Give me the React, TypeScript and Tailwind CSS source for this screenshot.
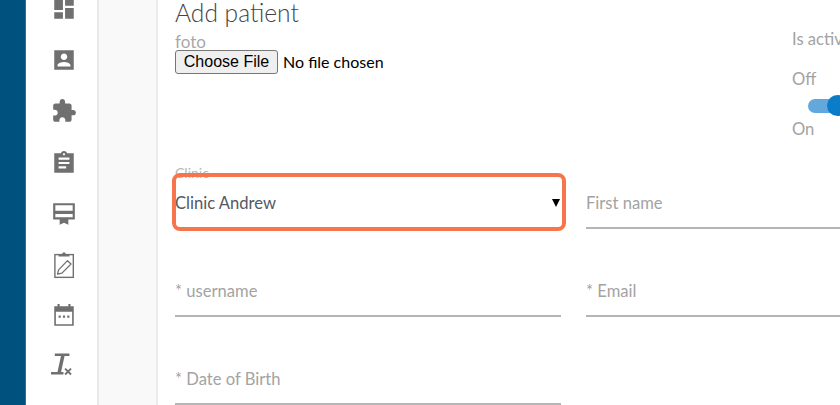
import React from "react";

const lato = "font-['Lato','Liberation_Sans',sans-serif]";

function Icon({ children }: { children: React.ReactNode }) {
  return (
    <div className="h-[51.3px] flex items-center justify-center">
      <svg viewBox="0 0 24 24" width="26" height="26" fill="#707070" className="overflow-visible">
        {children}
      </svg>
    </div>
  );
}

function Field({ label, width }: { label: string; width: string }) {
  return (
    <div className={`${width} h-[88px] flex flex-col justify-end shrink-0`}>
      <div className="h-[26px] text-[16.6px] leading-[26px] text-[#a3a3a3]">{label}</div>
      <div className="mt-[11px] h-[2px] bg-[#b5b5b5]" />
    </div>
  );
}

export default function App() {
  return (
    <div className={`w-[840px] h-[405px] overflow-hidden flex bg-white ${lato}`}>
      <div className="w-[26px] shrink-0 bg-[#01517f] border-r border-[#2b6f98]" />
      <div className="w-[73px] shrink-0 bg-white border-r-2 border-[#e8e8e8]">
        <div className="mt-[-17px] pl-[4px]">
          <Icon>
            <path d="M3 13h8V3H3v10zm0 8h8v-6H3v6zm10 0h8V11h-8v10zm0-18v6h8V3h-8z" />
          </Icon>
          <Icon>
            <path d="M3 3v18h18V3H3zm12 6c0 1.66-1.34 3-3 3s-3-1.34-3-3 1.34-3 3-3 3 1.34 3 3zm-9 8c0-2 4-3.1 6-3.1s6 1.1 6 3.1v1H6v-1z" />
          </Icon>
          <Icon>
            <path d="M20.5 11H19V7c0-1.1-.9-2-2-2h-4V3.5C13 2.12 11.88 1 10.5 1S8 2.12 8 3.5V5H4c-1.1 0-1.99.9-1.99 2v3.8H3.5c1.49 0 2.7 1.21 2.7 2.7s-1.21 2.7-2.7 2.7H2V20c0 1.1.9 2 2 2h3.8v-1.5c0-1.49 1.21-2.7 2.7-2.7 1.49 0 2.7 1.21 2.7 2.7V22H17c1.1 0 2-.9 2-2v-4h1.5c1.38 0 2.5-1.12 2.5-2.5S21.88 11 20.5 11z" />
          </Icon>
          <Icon>
            <path d="M21 3h-6.18C14.4 1.84 13.3 1 12 1c-1.3 0-2.4.84-2.82 2H3v18h18V3zm-9 0c.55 0 1 .45 1 1s-.45 1-1 1-1-.45-1-1 .45-1 1-1zm2 14H7v-2h7v2zm3-4H7v-2h10v2zm0-4H7V7h10v2z" />
          </Icon>
          <Icon>
            <path d="M22 2H2v15h6v5l4-2 4 2v-5h6V2zm-2 13H4v-3h16v3zm0-6H4V4h16v5z" />
          </Icon>
          <Icon>
            <rect x="3.6" y="2.4" width="17" height="21" fill="none" stroke="#707070" strokeWidth="1.3" />
            <path d="M7 4.2V2.2h3.2C10.5 1 11.2.2 12 .2s1.5.8 1.8 2H17v2H7z" />
            <path
              d="M6 20.5l1-4L15.2 8l3.3 3.1-8.4 8.4L6 20.5z"
              fill="none"
              stroke="#707070"
              strokeWidth="1.2"
              strokeLinejoin="round"
            />
          </Icon>
          <Icon>
            <path
              fillRule="evenodd"
              d="M3 3h3V1h2v2h8V1h2v2h3v18H3V3zm1.5 5v11.5h15V8h-15zM7 11.5h2v2H7v-2zm4 0h2v2h-2v-2zm4 0h2v2h-2v-2z"
            />
          </Icon>
          <Icon>
            <path d="M3.5-1.4H17V.9h-4.5L9.3 15.7H6L9.2.9H3.5V-1.4zM0 15.7h11.5v2.4H0v-2.4z" />
            <path d="M13 12.5l5.5 5.5M18.5 12.5L13 18" fill="none" stroke="#707070" strokeWidth="1.7" />
          </Icon>
        </div>
      </div>
      <div className="w-[59px] shrink-0 bg-[#f9f9f9] border-r-2 border-[#ececec]" />
      <div className="flex-1 min-w-0 pl-[17px] relative">
        <div className="h-[26px] text-[24.6px] leading-[26px] font-light text-[#444444]">Add patient</div>
        <div className="flex h-[144px]">
          <div className="w-[617px] shrink-0">
            <div className="mt-[8px] h-[16px] text-[17px] leading-[16px] text-[#a8a8a8]">foto</div>
            <div className="flex items-center">
              <button className="h-[24px] w-[103px] bg-[#efefef] border border-[#767676] rounded-[3px] font-['Liberation_Sans',sans-serif] text-[16px] leading-none text-black">
                Choose File
              </button>
              <span className="ml-[5px] -mt-[1px] text-[16px] text-black">No file chosen</span>
            </div>
          </div>
          <div className="text-[16.6px] text-[#a3a3a3]">
            <div className="mt-[1px] h-[24px] leading-[24px] whitespace-nowrap">Is active</div>
            <div className="mt-[16px] h-[24px] leading-[24px]">Off</div>
            <div className="relative mt-[4px] ml-[16px] w-[60px] h-[21px] flex items-center">
              <div className="w-[40px] h-[14px] rounded-full bg-[#62a8dd]" />
              <div className="absolute left-[19px] top-0 w-[21px] h-[21px] rounded-full bg-[#0a7cc8]" />
            </div>
            <div className="mt-[1px] h-[24px] leading-[24px]">On</div>
          </div>
        </div>
        <div className="flex gap-[25px]">
          <div className="w-[386px] shrink-0 h-[59px] relative">
            <div className="-mt-[3px] h-[12px] text-[14px] leading-[12px] text-[#b8b8b8]">Clinic</div>
            <div className="mt-[11px] h-[26px] flex items-center justify-between text-[16.6px] text-[#55595f]">
              <span>Clinic Andrew</span>
              <span className="mr-[1px] w-0 h-0 border-x-[4px] border-t-[8px] border-x-transparent border-t-black" />
            </div>
            <div className="absolute left-[-3px] top-[3px] w-[394px] h-[58px] rounded-[8px] border-[4px] border-[#f6754a]" />
          </div>
          <Field label="First name" width="w-[300px] -mt-[29px]" />
        </div>
        <div className="flex gap-[25px]">
          <Field label="* username" width="w-[386px]" />
          <Field label="* Email" width="w-[300px]" />
        </div>
        <div className="flex gap-[25px]">
          <Field label="* Date of Birth" width="w-[386px]" />
        </div>
      </div>
    </div>
  );
}
